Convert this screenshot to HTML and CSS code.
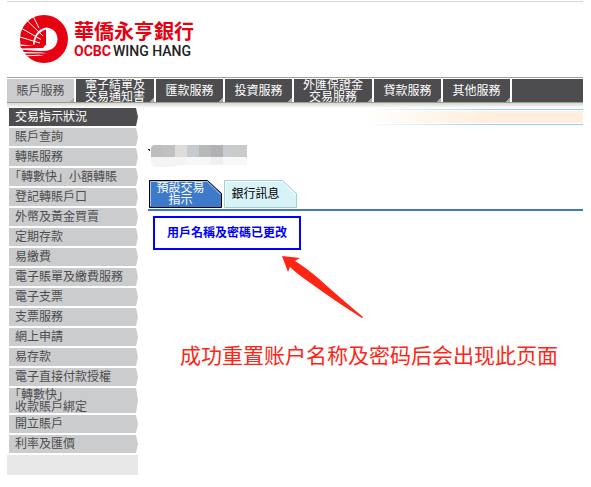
FILE: index.html
```html
<!DOCTYPE html>
<html lang="zh-Hant">
<head>
  <meta charset="UTF-8">
  <title>華僑永亨銀行</title>
  <link rel="stylesheet" href="styles.css">
</head>
<body>
  <header class="header">
    <svg class="logo" viewBox="0 0 48 48" aria-hidden="true">
      <circle cx="24" cy="24" r="24" fill="#e60012"/>
      <path d="M26.500 12.500C33 13 37.500 18 37.500 24C37.500 30 33 35.500 26 35.500C23 35.500 21 35 19 34L13 30C13 21 18 14 26.500 12.500Z" fill="#fff"/>
      <path d="M14.500 30C15 22 19 16.500 26 14.500V30Z" fill="#e60012"/>
      <path d="M6.500 5L23 21M1 13L21 24.500M0 22L20 28M13 1L19 13" fill="none" stroke="#fff" stroke-width="1"/>
      <path d="M0 29.500H26L23 33H1Z" fill="#e60012"/>
      <path d="M0 29.500L14 30.500L1 31Z" fill="#fff"/>
      <path d="M1 33.500L23 33L28 35.500L20 36L1.500 34.800Z" fill="#fff"/>
      <path d="M3 37L22 37.500L27 38.300L5 38.500ZM5 40.200L19 39.700L24 40.500L7 41.300Z" fill="#fff"/>
    </svg>
    <div class="brand">
      <div class="brand-zh">華僑永亨銀行</div>
      <div class="brand-en"><span class="brand-red">OCBC</span><span>WING HANG</span></div>
    </div>
  </header>

  <nav class="nav">
    <a class="nav-item active" href="#">賬戶服務</a>
    <a class="nav-item wide" href="#">電子結單及<br>交易通知書</a>
    <a class="nav-item" href="#">匯款服務</a>
    <a class="nav-item" href="#">投資服務</a>
    <a class="nav-item wide" href="#">外匯保證金<br>交易服務</a>
    <a class="nav-item" href="#">貸款服務</a>
    <a class="nav-item" href="#">其他服務</a>
  </nav>
  <div class="nav-shadow"></div>

  <div class="page">
    <aside class="sidebar">
      <a class="side-item active" href="#">交易指示狀況</a>
      <a class="side-item" href="#">賬戶查詢</a>
      <a class="side-item" href="#">轉賬服務</a>
      <a class="side-item" href="#">「轉數快」小額轉賬</a>
      <a class="side-item" href="#">登記轉賬戶口</a>
      <a class="side-item" href="#">外幣及黃金買賣</a>
      <a class="side-item" href="#">定期存款</a>
      <a class="side-item" href="#">易繳費</a>
      <a class="side-item" href="#">電子賬單及繳費服務</a>
      <a class="side-item" href="#">電子支票</a>
      <a class="side-item" href="#">支票服務</a>
      <a class="side-item" href="#">網上申請</a>
      <a class="side-item" href="#">易存款</a>
      <a class="side-item" href="#">電子直接付款授權</a>
      <a class="side-item" href="#">「轉數快」<br>收款賬戶綁定</a>
      <a class="side-item" href="#">開立賬戶</a>
      <a class="side-item" href="#">利率及匯價</a>
      <div class="side-end"></div>
    </aside>

    <main class="main">
      <div class="banner"></div>
      <svg class="masked" viewBox="0 0 99 22" aria-hidden="true">
        <path d="M0 4h2v2h-1v-1h-1z" fill="#333"/>
        <path d="M3 4Q3 0 7 0H15V12H3Z" fill="#bdbec0"/>
        <path d="M15 0h12v12h-12z" fill="#c1c1c1"/>
        <path d="M27 0h12v12h-12z" fill="#dddcd9"/>
        <path d="M39 0h12v12h-12z" fill="#c6cbd0"/>
        <path d="M51 0h12v12h-12z" fill="#b8b8ba"/>
        <path d="M63 0h12v12h-12z" fill="#b1b1b4"/>
        <path d="M75 0h12v12h-12z" fill="#c8cbd0"/>
        <path d="M87 0h12v12h-12z" fill="#cacaca"/>
        <path d="M3 12H39V20Q30 20 24 22H8Q3 21 3 16Z" fill="#f4f4f4"/>
        <path d="M39 12h24v8h-24z" fill="#f7f7f8"/>
        <path d="M63 12h12v8h-12z" fill="#f0f0f1"/>
        <path d="M75 12h24v8h-24z" fill="#f8f8f8"/>
      </svg>

      <div class="tabs">
        <button class="tab selected" type="button">
          <svg class="tab-shape" viewBox="0 0 73 28" aria-hidden="true">
            <path d="M0.500 27.500V0.500H58.500L72.500 13.500V27.500Z" fill="#3d7ac9" stroke="#000"/>
            <path d="M1.500 26V1.500H58L71.500 14.500" fill="none" stroke="#a9c8ee"/>
          </svg>
          <span class="tab-text">預設交易<br>指示</span>
        </button>
        <button class="tab" type="button">
          <svg class="tab-shape" viewBox="0 0 73 28" aria-hidden="true">
            <path d="M0.500 27.500V0.500H58.500L72.500 13.500V27.500Z" fill="#d8f3f7" stroke="#a5cdd0"/>
            <path d="M1.500 26V1.500H58L71.500 14.500" fill="none" stroke="#f5ffff"/>
          </svg>
          <span class="tab-text">銀行訊息</span>
        </button>
      </div>

      <div class="message">用戶名稱及密碼已更改</div>
      <svg class="arrow" viewBox="0 0 82 64" aria-hidden="true">
        <path d="M0 0L18 2L13 5Q23 11 36 22Q56 40 81 61L80 62Q50 43 27 26Q14 17 8 11L6 16Z" fill="#ff2514"/>
      </svg>
      <p class="note" lang="zh-Hans">成功重置账户名称及密码后会出现此页面</p>
    </main>
  </div>
</body>
</html>
```
FILE: styles.css
```css
* {
  box-sizing: border-box;
}
body {
  margin: 0;
  padding: 1px 8px 12px 7px;
  background: #fff;
  font-family: "Liberation Sans", "Noto Sans CJK TC", sans-serif;
  font-size: 12px;
  line-height: 12px;
}
a {
  text-decoration: none;
}

/* header */
.header {
  display: flex;
  align-items: flex-start;
  gap: 6px;
  height: 76px;
  padding: 13px 0 0 13px;
  border-top: 1px solid #d8d8d8;
}
.logo {
  width: 48px;
  height: 48px;
}
.brand {
  padding-top: 6px;
  white-space: nowrap;
}
.brand-zh {
  color: #e60012;
  font-family: "Noto Sans CJK TC", sans-serif;
  font-size: 20px;
  line-height: 20px;
  font-weight: bold;
}
.brand-en {
  display: flex;
  gap: 2px;
  color: #222;
  font-family: Roboto, "Noto Sans", sans-serif;
  font-size: 14px;
  line-height: 20px;
  font-weight: 500;
}
.brand-red {
  color: #e60012;
  font-weight: 700;
}

/* top menu */
.nav {
  display: flex;
  height: 26px;
  background: #4d4d4f;
  border-top: 1px solid #a0a392;
  border-bottom: 1px solid #98a080;
  box-shadow: inset 0 1px #fff;
}
.nav-item {
  display: flex;
  align-items: center;
  justify-content: center;
  width: 69px;
  margin-top: 1px;
  border-right: 2px solid #fff;
  background: linear-gradient(135deg, transparent 50%, #aaa 50%) right bottom / 4px 5px no-repeat;
  color: #fff;
  text-align: center;
  white-space: nowrap;
}
.nav-item.wide {
  width: 80px;
}
.nav-item.active {
  background-color: #cbccce;
  color: #4d4d4f;
}
.nav-shadow {
  height: 5px;
  background: linear-gradient(#d5d5da, #fff);
}

.page {
  display: grid;
  grid-template-columns: 131px 1fr;
}

/* left menu */
.sidebar {
  display: flex;
  flex-direction: column;
  gap: 2px;
}
.side-item {
  margin-left: 2px;
  padding: 3px 0 3px 6px;
  background: #cbccce;
  color: #4d4d4f;
  clip-path: polygon(0 0, calc(100% - 2px) 0, 100% 50%, calc(100% - 2px) 100%, 0 100%);
  text-spacing-trim: trim-start;
  white-space: nowrap;
}
.side-item.active {
  background: #4d4d4f;
  color: #fff;
}
.side-item:has(br) {
  padding: 1px 0 0 6px;
}
.side-end {
  height: 20px;
  background: #e7e7e7;
}

/* content */
.main {
  display: flex;
  flex-direction: column;
  align-items: flex-start;
  padding-left: 10px;
}
.banner {
  align-self: flex-end;
  width: 50%;
  height: 16px;
  margin-top: 1px;
  background:
    linear-gradient(90deg, #fff, #8fd0fa 60%) top / 100% 1px no-repeat,
    linear-gradient(90deg, #fff, #8fd0fa 60%) bottom / 100% 1px no-repeat,
    linear-gradient(90deg, #fff 0%, #ffefdc 55%) center / 100% 12px no-repeat;
}
.masked {
  width: 99px;
  height: 22px;
  margin-top: 20px;
}
.tabs {
  display: flex;
  align-self: stretch;
  gap: 2px;
  margin-top: 13px;
  padding: 0 0 1px 1px;
  border-bottom: 2px solid #3d7ac9;
}
.tab {
  display: grid;
  width: 73px;
  height: 28px;
  padding: 0;
  border: none;
  background: none;
  color: #000;
  font: inherit;
  cursor: pointer;
}
.tab-shape,
.tab-text {
  grid-area: 1 / 1;
}
.tab-shape {
  width: 73px;
  height: 28px;
}
.tab-text {
  align-self: center;
  padding-right: 10px;
}
.tab.selected {
  color: #fff;
}
.message {
  margin: 5px 0 0 5px;
  padding: 9px 12px;
  border: 2px solid #00f;
  color: #00f;
  font-weight: bold;
}
.arrow {
  width: 82px;
  height: 64px;
  margin: 6px 0 0 134px;
}
.note {
  margin: 20px 0 0 32px;
  color: #ff2514;
  font-family: "Noto Sans CJK SC", sans-serif;
  font-size: 21px;
  line-height: 28px;
  font-weight: 400;
}
```
